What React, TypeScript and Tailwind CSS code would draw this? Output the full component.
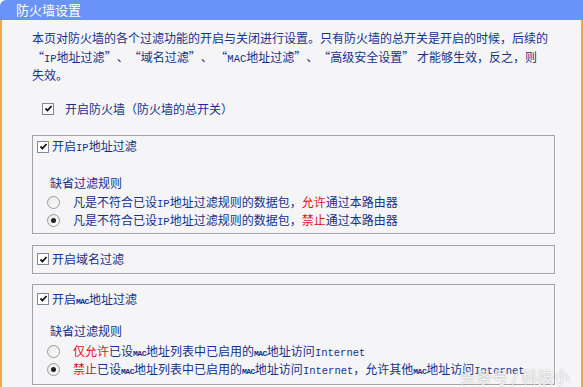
import React from 'react';

const navy = 'text-[#16318a]';

function Mono({ children }: { children: React.ReactNode }) {
  return <span className="font-['Liberation_Mono',monospace] text-[10.5px]">{children}</span>;
}

function Tiny({ children }: { children: React.ReactNode }) {
  return <span className="font-['Liberation_Mono',monospace] text-[8px] font-bold tracking-[-0.5px]">{children}</span>;
}

function Red({ children }: { children: React.ReactNode }) {
  return <span className="text-[#e0121a]">{children}</span>;
}

function LQ() {
  return <span className="inline-block w-[12px] text-right">“</span>;
}

function RQ() {
  return <span className="inline-block w-[12px] text-left">”</span>;
}

function CheckBox() {
  return (
    <span className="inline-flex h-[12px] w-[12px] shrink-0 items-center justify-center border border-[#7f8a99] bg-white">
      <svg width="9" height="9" viewBox="0 0 9 9">
        <path d="M1.5 4.5 L3.5 6.5 L7.5 2" fill="none" stroke="#111" strokeWidth="1.8" />
      </svg>
    </span>
  );
}

function Radio({ checked }: { checked?: boolean }) {
  return (
    <span className="inline-flex h-[13px] w-[13px] shrink-0 items-center justify-center rounded-full border border-[#9a9a9a] bg-gradient-to-br from-[#e6e6e6] to-white">
      {checked && <span className="h-[5px] w-[5px] rounded-full bg-[#222]" />}
    </span>
  );
}

function FilterBox({ className, children }: { className?: string; children: React.ReactNode }) {
  return (
    <div className={`w-[523px] border border-[#a3a3a3] shadow-[1px_1px_0_#ffffff] ${className ?? ''}`}>
      {children}
    </div>
  );
}

function BoxTitle({ children }: { children: React.ReactNode }) {
  return (
    <div className="flex h-[18px] items-center pl-[4px]">
      <CheckBox />
      <span className="ml-[3px]">{children}</span>
    </div>
  );
}

function RuleRow({ checked, children }: { checked?: boolean; children: React.ReactNode }) {
  return (
    <div className="flex h-[18px] items-center pl-[14px] whitespace-nowrap">
      <Radio checked={checked} />
      <span className="ml-[13px]">{children}</span>
    </div>
  );
}

export default function App() {
  return (
    <div className={`relative h-[387px] w-[583px] overflow-hidden bg-white font-['Noto_Sans_CJK_SC','Noto_Sans',sans-serif] text-[12px] ${navy}`}>
      <div className="h-[20px] rounded-tl-[6px] bg-[#6a93fa] pl-[16px] text-[13px] leading-[20px] text-white">
        防火墙设置
      </div>
      <div className="h-[367px] border-l-2 border-r-2 border-[#f3a54a] bg-[#f5f5f7] pl-[30px]">
        <div className="pt-[9px] whitespace-nowrap">
          <div className="h-[18.5px] leading-[18.5px]">
            本页对防火墙的各个过滤功能的开启与关闭进行设置。只有防火墙的总开关是开启的时候，后续的
          </div>
          <div className="h-[18.5px] leading-[18.5px]">
            <LQ />
            <Mono>IP</Mono>地址过滤<RQ />、<LQ />域名过滤<RQ />、 <LQ />
            <Mono>MAC</Mono>地址过滤<RQ />、<LQ />高级安全设置<RQ /> 才能够生效，反之，则
          </div>
          <div className="h-[18.5px] leading-[18.5px]">失效。</div>
        </div>

        <div className="mt-[15px] flex h-[18px] items-center pl-[10px]">
          <CheckBox />
          <span className="ml-[11px]">开启防火墙（防火墙的总开关）</span>
        </div>

        <FilterBox className="mt-[17px] h-[99px] pt-[2px]">
          <BoxTitle>
            开启<Mono>IP</Mono>地址过滤
          </BoxTitle>
          <div className="mt-[18px] h-[18px] pl-[17px] leading-[18px]">缺省过滤规则</div>
          <div className="mt-[2px]">
            <RuleRow>
              凡是不符合已设<Mono>IP</Mono>地址过滤规则的数据包，<Red>允许</Red>通过本路由器
            </RuleRow>
            <RuleRow checked>
              凡是不符合已设<Mono>IP</Mono>地址过滤规则的数据包，<Red>禁止</Red>通过本路由器
            </RuleRow>
          </div>
        </FilterBox>

        <FilterBox className="mt-[11px] flex h-[29px] items-center">
          <BoxTitle>开启域名过滤</BoxTitle>
        </FilterBox>

        <FilterBox className="mt-[10px] h-[101px] pt-[5px]">
          <BoxTitle>
            开启<Tiny>MAC</Tiny>地址过滤
          </BoxTitle>
          <div className="mt-[14px] h-[18px] pl-[17px] leading-[18px]">缺省过滤规则</div>
          <div className="mt-[3px]">
            <RuleRow>
              <Red>仅允许</Red>已设<Tiny>MAC</Tiny>地址列表中已启用的<Tiny>MAC</Tiny>地址访问<Mono>Internet</Mono>
            </RuleRow>
            <RuleRow checked>
              <Red>禁止</Red>已设<Tiny>MAC</Tiny>地址列表中已启用的<Tiny>MAC</Tiny>地址访问<Mono>Internet</Mono>，允许其他<Tiny>MAC</Tiny>地址访问<Mono>Internet</Mono>
            </RuleRow>
          </div>
        </FilterBox>
      </div>

      <div className="absolute left-[460px] top-[366px] text-[16px] leading-[20px] text-white/80 [text-shadow:0_0_2px_rgba(0,0,0,0.35)]">
        头条号 / 科技小明
      </div>
    </div>
  );
}
